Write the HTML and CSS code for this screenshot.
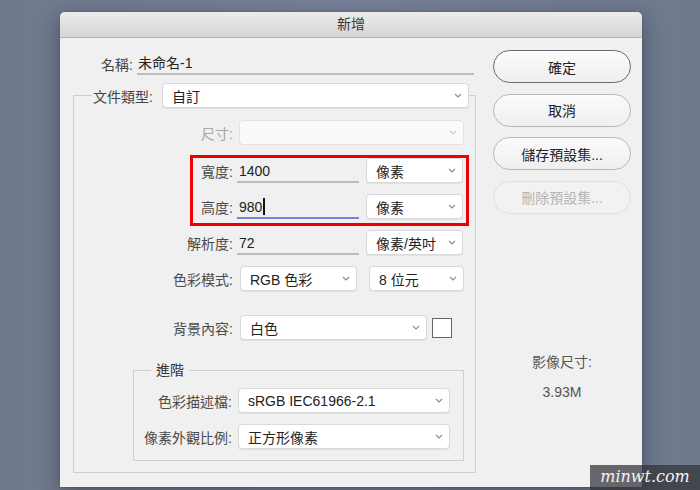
FILE: index.html
```html
<!DOCTYPE html>
<html>
<head>
	<meta charset="utf-8">
	<title>新增</title>
	<link rel="stylesheet" href="styles.css">
</head>
<body>

	<div class="dialog">
		<div class="titlebar">新增</div>
		<div class="dialog-body">

			<div class="form">
				<div class="name-row">
					<span class="name-label">名稱:</span>
					<span class="name-field">未命名-1</span>
				</div>

				<fieldset class="doc-box">
					<legend>
						<span class="legend-row">
							<span class="lbl-plain">文件類型:</span>
							<span class="select sel-doctype">自訂<svg class="chev" width="8" height="5" viewBox="0 0 8 5"><path d="M1 1l3 3 3-3"/></svg></span>
						</span>
					</legend>

					<div class="row row-size">
						<span class="lbl disabled">尺寸:</span>
						<span class="select sel-wide is-disabled"><svg class="chev" width="8" height="5" viewBox="0 0 8 5"><path d="M1 1l3 3 3-3"/></svg></span>
					</div>

					<div class="row">
						<span class="lbl">寬度:</span>
						<span class="field">1400</span>
						<span class="select sel-unit">像素<svg class="chev" width="8" height="5" viewBox="0 0 8 5"><path d="M1 1l3 3 3-3"/></svg></span>
					</div>

					<div class="row">
						<span class="lbl">高度:</span>
						<span class="field active">980<i class="caret"></i></span>
						<span class="select sel-unit">像素<svg class="chev" width="8" height="5" viewBox="0 0 8 5"><path d="M1 1l3 3 3-3"/></svg></span>
					</div>

					<div class="row">
						<span class="lbl">解析度:</span>
						<span class="field">72</span>
						<span class="select sel-unit">像素/英吋<svg class="chev" width="8" height="5" viewBox="0 0 8 5"><path d="M1 1l3 3 3-3"/></svg></span>
					</div>

					<div class="row">
						<span class="lbl">色彩模式:</span>
						<span class="select sel-mode">RGB 色彩<svg class="chev" width="8" height="5" viewBox="0 0 8 5"><path d="M1 1l3 3 3-3"/></svg></span>
						<span class="select sel-bits">8 位元<svg class="chev" width="8" height="5" viewBox="0 0 8 5"><path d="M1 1l3 3 3-3"/></svg></span>
					</div>

					<div class="row row-bg">
						<span class="lbl">背景內容:</span>
						<span class="select sel-bg">白色<svg class="chev" width="8" height="5" viewBox="0 0 8 5"><path d="M1 1l3 3 3-3"/></svg></span>
						<span class="swatch"></span>
					</div>

					<fieldset class="adv-box">
						<legend>進階</legend>
						<div class="row">
							<span class="lbl lbl-adv">色彩描述檔:</span>
							<span class="select sel-adv">sRGB IEC61966-2.1<svg class="chev" width="8" height="5" viewBox="0 0 8 5"><path d="M1 1l3 3 3-3"/></svg></span>
						</div>
						<div class="row">
							<span class="lbl lbl-adv">像素外觀比例:</span>
							<span class="select sel-adv">正方形像素<svg class="chev" width="8" height="5" viewBox="0 0 8 5"><path d="M1 1l3 3 3-3"/></svg></span>
						</div>
					</fieldset>
				</fieldset>
			</div>

			<div class="side">
				<button class="btn btn-default">確定</button>
				<button class="btn">取消</button>
				<button class="btn">儲存預設集...</button>
				<button class="btn" disabled>刪除預設集...</button>

				<div class="img-size">
					<div class="img-size-label">影像尺寸:</div>
					<div class="img-size-value">3.93M</div>
				</div>
			</div>

		</div>
		<!-- annotation around width / height -->
		<div class="mark"></div>
	</div>

	<div class="watermark">minwt.com</div>

</body>
</html>
```

FILE: styles.css
```css
*{
	margin: 0;
	padding: 0;
	box-sizing: border-box;
}
html, body{
	height: 100%;
}
body{
	background: linear-gradient(90deg, #6f798b 0%, #78829a 50%, #6e798c 100%);
	font-family: "Liberation Sans", "Noto Sans CJK TC", sans-serif;
	font-size: 14px;
	color: #333;
	overflow: hidden;
	position: relative;
}
.dialog{
	position: relative;
	width: 582px;
	height: 475px;
	margin: 12px 0 0 60px;
	border-radius: 5px 5px 0 0;
	background: #f0f0f0;
	box-shadow: 0 0 1px rgba(0,0,0,.6), 0 6px 22px rgba(20,25,40,.45);
	overflow: hidden;
}
.titlebar{
	height: 26px;
	line-height: 25px;
	text-align: center;
	color: #3a3a3a;
	background: linear-gradient(#ececec, #d4d4d4);
	border-bottom: 1px solid #b4b4b4;
}
.dialog-body{
	display: flex;
	height: 449px;
}

/* left form */
.form{
	width: 421px;
	padding: 15px 0 0 13px;
}
.name-row{
	display: flex;
	align-items: center;
	height: 22px;
}
.name-label{
	width: 74px;
	text-align: right;
	padding-right: 4px;
	margin-left: -10px;
	color: #444;
}
.name-field{
	width: 337px;
	height: 22px;
	line-height: 21px;
	padding-left: 1px;
	border-bottom: 2px solid #bdbdbd;
	color: #222;
}
.doc-box{
	margin-top: 8px;
	width: 403px;
	height: 390px;
	border: 1px solid #cfcfcf;
	padding: 12px 0 0 0;
}
.doc-box > legend{
	margin-left: 18px;
	padding: 0;
}
.legend-row{
	display: flex;
	align-items: center;
}
.lbl-plain{
	color: #444;
	padding-left: 1px;
	margin-right: 9px;
}
.row{
	display: flex;
	align-items: center;
	height: 25px;
	margin-bottom: 11px;
}
.row-size{
	margin-bottom: 13px;
}
.row-bg{
	margin-top: 24px;
	margin-bottom: 0;
}
.lbl{
	width: 159px;
	text-align: right;
	color: #4a4a4a;
	margin-right: 6px;
}
.lbl.disabled{
	color: #a8a8a8;
}

.select{
	display: flex;
	align-items: center;
	height: 25px;
	padding: 0 6px 0 9px;
	background: #fff;
	border: 1px solid #d9d9d9;
	border-radius: 4px;
	box-shadow: 0 1px 1px rgba(0,0,0,.07);
	color: #222;
	white-space: nowrap;
}
.select.is-disabled{
	background: #fafafa;
	border-color: #e2e2e2;
	box-shadow: none;
}
.chev{
	flex: none;
	margin-left: auto;
}
.chev path{
	fill: none;
	stroke: #8c8c8c;
	stroke-width: 1.1;
}
.is-disabled .chev path{
	stroke: #c8c8c8;
}
.sel-doctype{ width: 307px; }
.sel-wide{ width: 225px; }
.sel-unit{ width: 97px; margin-left: 7px; }
.sel-mode{ width: 117px; margin-left: 1px; }
.sel-bits{ width: 95px; margin-left: 12px; }
.sel-bg{ width: 187px; margin-left: 1px; }
.sel-adv{ width: 212px; }

.field{
	display: flex;
	align-items: center;
	width: 122px;
	height: 25px;
	padding: 2px 0 0 2px;
	margin-left: -2px;
	border-bottom: 2px solid #bcbcbc;
	color: #222;
}
.field.active{
	border-bottom: 2px solid #7283dd;
}
.caret{
	display: inline-block;
	width: 2px;
	height: 17px;
	margin-left: 1px;
	background: #111;
}
.swatch{
	width: 20px;
	height: 20px;
	margin-left: 5px;
	background: #fff;
	border: 1px solid #666;
}

.adv-box{
	margin: 20px 0 0 59px;
	width: 331px;
	border: 1px solid #cfcfcf;
	padding: 8px 0 0 0;
	height: 101px;
}
.adv-box > legend{
	margin-left: 17px;
	padding: 0 5px;
	color: #333;
	line-height: 20px;
}
.lbl-adv{
	width: 98px;
	margin-right: 6px;
}

/* right side */
.side{
	flex: 1;
	padding: 12px 11px 0 12px;
	display: flex;
	flex-direction: column;
}
.btn{
	height: 33px;
	margin-bottom: 10.5px;
	border-radius: 17px;
	border: 1px solid #b8b8b8;
	background: linear-gradient(#fbfbfb, #efefef);
	font-family: "Liberation Sans", "Noto Sans CJK TC", sans-serif;
	font-size: 14px;
	color: #222;
}
.btn-default{
	border: 1.5px solid #6a6a6a;
}
.btn[disabled]{
	border-color: #dedede;
	color: #b4b4b4;
	background: #f2f2f2;
}
.img-size{
	margin-top: 128px;
	text-align: center;
	color: #555;
	line-height: 20px;
}
.img-size-value{
	margin-top: 10px;
}

.mark{
	position: absolute;
	left: 130px;
	top: 143px;
	width: 279px;
	height: 71px;
	border: 3px solid #ee0000;
}
.watermark{
	position: absolute;
	right: 0;
	bottom: 0;
	width: 110px;
	height: 25px;
	line-height: 24px;
	text-align: center;
	background: rgba(50,50,55,.72);
	color: #f2f2f2;
	font-family: "DejaVu Serif", serif;
	font-style: italic;
	font-size: 16px;
}
```
